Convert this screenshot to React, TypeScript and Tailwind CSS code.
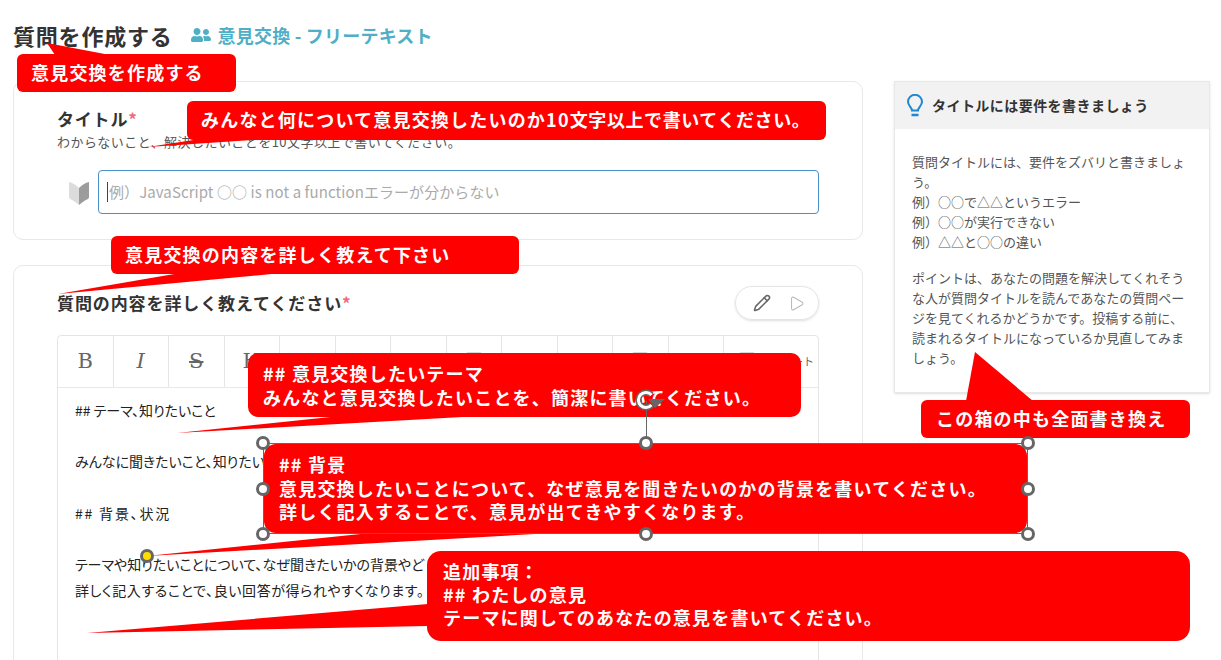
import { Pencil, Play, Square, ArrowUp } from 'lucide-react'
import { FaUserFriends } from 'react-icons/fa'

const sansJp = "font-['Noto_Sans_CJK_JP','Liberation_Sans',sans-serif]"
const slab = "font-['DejaVu_Serif',serif] text-[21px] leading-none"

function Wakaba() {
  return (
    <svg width="22" height="28" viewBox="0 0 22 28" className="shrink-0">
      <path d="M1 4 Q6 5 11 10 L11 27 Q5 22 2 21 Q1 20 1 19 Z" fill="#dcdcdc" />
      <path d="M21 4 Q16 5 11 10 L11 27 Q17 22 20 21 Q21 20 21 19 Z" fill="#9c9c9c" />
    </svg>
  )
}

function Bulb() {
  return (
    <svg width="18" height="24" viewBox="0 0 18 24" className="shrink-0" fill="none" stroke="#1e88d0" strokeWidth="2">
      <path d="M6 16.5 C6 13.5 2 12 2 7.8 A7 7 0 0 1 16 7.8 C16 12 12 13.5 12 16.5 Z" />
      <path d="M5.5 21 H12.5" strokeWidth="2.5" />
    </svg>
  )
}

const toolCells = [
  <span className={slab}>B</span>,
  <span className={`${slab} italic`}>I</span>,
  <span className={`${slab} line-through`}>S</span>,
  <span className={slab}>H</span>,
  null,
  null,
  <ArrowUp size={22} />,
  <Square size={22} />,
  null,
  null,
  <Square size={22} />,
  null,
]

function Callout({ className, children }: { className: string; children: React.ReactNode }) {
  return (
    <div className={`absolute bg-[#ff0000] text-white text-[18px] font-bold tracking-[1.2px] whitespace-nowrap ${className}`}>
      {children}
    </div>
  )
}

function Handle({ className, fill = 'bg-white' }: { className: string; fill?: string }) {
  return <div className={`absolute w-[14px] h-[14px] rounded-full border-[3px] border-[#666666] ${fill} ${className}`} />
}

// 図形の選択枠。ハンドルは枠の四隅と辺の中央に置く
function SelectionFrame() {
  return (
    <div className="absolute left-[263px] top-[443px] w-[765px] h-[91px] border-[1.5px] border-[#666666]">
      <div className="absolute left-1/2 -top-[43px] w-[1.5px] h-[43px] bg-[#666666]" />
      <Handle className="-left-[8px] -top-[8px]" />
      <Handle className="left-1/2 -ml-[7px] -top-[8px]" />
      <Handle className="-right-[8px] -top-[8px]" />
      <Handle className="-left-[8px] top-1/2 -mt-[7px]" />
      <Handle className="-right-[8px] top-1/2 -mt-[7px]" />
      <Handle className="-left-[8px] -bottom-[8px]" />
      <Handle className="left-1/2 -ml-[7px] -bottom-[8px]" />
      <Handle className="-right-[8px] -bottom-[8px]" />
    </div>
  )
}

export default function App() {
  return (
    <div className={`relative w-[1221px] h-[660px] overflow-hidden bg-white text-[#333333] ${sansJp}`}>
      <div className="flex pl-[13px]">
        <main className="w-[850px]">
          <div className="flex items-center h-[81px] pb-[12px]">
            <h1 className="text-[22px] tracking-[0.8px] font-bold leading-none">質問を作成する</h1>
            <div className="flex items-center gap-[7px] ml-[18px] mt-[1px] text-[#4fafc6] text-[18px] tracking-[0.2px] font-bold">
              <FaUserFriends size={20} />
              <span>意見交換 - フリーテキスト</span>
            </div>
          </div>

          <section className="h-[159px] border border-[#e8e8e8] rounded-[10px] px-[43px] pt-[24px]">
            <div className="text-[17px] tracking-[0.8px] font-bold leading-[26px]">
              タイトル<span className="text-[#f06a7a]">*</span>
            </div>
            <p className="text-[13px] tracking-[0.45px] leading-[20px] text-[#555555]">わからないこと、解決したいことを10文字以上で書いてください。</p>
            <div className="flex items-center gap-[8px] mt-[18px] pl-[11px]">
              <Wakaba />
              <div className="flex-1 h-[44px] border border-[#4a90c8] rounded-[4px] flex items-center pl-[8px] text-[15px] tracking-[0.08px] text-[#aaaaaa]">
                <span className="w-px h-[20px] bg-[#444444] mr-[1px]" />
                例）JavaScript ○○ is not a functionエラーが分からない
              </div>
            </div>
          </section>

          <section className="mt-[25px] h-[420px] border border-[#e8e8e8] rounded-[10px] px-[43px] pt-[19px]">
            <div className="flex items-center justify-between h-[36px]">
              <div className="text-[17px] tracking-[0.9px] font-bold">
                質問の内容を詳しく教えてください<span className="text-[#f06a7a]">*</span>
              </div>
              <div className="flex items-center gap-[17px] w-[84px] h-[34px] rounded-full border border-[#e5e5e5] shadow-sm pl-[17px]">
                <Pencil size={18} className="text-[#666666]" />
                <Play size={17} strokeWidth={1.5} className="text-[#bbbbbb]" />
              </div>
            </div>
            <div className="mt-[14px] border border-[#e5e5e5] rounded-t-[4px] h-[330px]">
              <div className="flex h-[52px] border-b border-[#e8e8e8]">
                {toolCells.map((icon, i) => (
                  <div key={i} className="w-[55.5px] border-r border-[#e5e5e5] flex items-center justify-center text-[#666666]">
                    {icon}
                  </div>
                ))}
                <div className="flex-1 flex items-center pl-[12px] text-[11px] text-[#666666]">
                  <Square size={22} fill="#666666" />
                  <span className="ml-auto pr-[4px]">ート</span>
                </div>
              </div>
              <div className="pl-[17px] pt-[10px] text-[14px] leading-[25.7px] text-[#222222] [font-feature-settings:'palt']">
                <p>## テーマ、知りたいこと</p>
                <p className="mt-[25.7px]">みんなに聞きたいこと、知りたい</p>
                <p className="mt-[25.7px] tracking-[1.8px]">## 背景、状況</p>
                <p className="mt-[25.7px]">テーマや知りたいことについて、なぜ聞きたいかの背景やど</p>
                <p className="tracking-[0.6px]">詳しく記入することで、良い回答が得られやすくなります。</p>
              </div>
            </div>
          </section>
        </main>

        <aside className="ml-[31px] mt-[81px] w-[316px] h-[312px] border border-[#e8e8e8] shadow-sm">
          <div className="flex items-center h-[47px] bg-[#f2f2f2] pl-[11px] gap-[8px] text-[14px] tracking-[0.45px] font-bold">
            <Bulb />
            タイトルには要件を書きましょう
          </div>
          <div className="px-[17px] pt-[23px] text-[13px] leading-[20px] text-[#555555]">
            <p>質問タイトルには、要件をズバリと書きましょう。</p>
            <p>例）○○で△△というエラー</p>
            <p>例）○○が実行できない</p>
            <p>例）△△と○○の違い</p>
            <p className="mt-[16px]">
              ポイントは、あなたの問題を解決してくれそうな人が質問タイトルを読んであなたの質問ページを見てくれるかどうかです。投稿する前に、読まれるタイトルになっているか見直してみましょう。
            </p>
          </div>
        </aside>
      </div>

      {/* 吹き出しのしっぽ */}
      <svg className="absolute inset-0" width="1221" height="660" viewBox="0 0 1221 660">
        <polygon points="47,43 55,55 110,55" fill="#ff0000" />
        <polygon points="148,147 200,139 267,139" fill="#ff0000" />
        <polygon points="58,294 180,273 282,273" fill="#ff0000" />
        <polygon points="177,433 340,416 480,416" fill="#ff0000" />
        <polygon points="147,556 380,532 570,532" fill="#ff0000" />
        <polygon points="87,633 428,604 428,626" fill="#ff0000" />
        <polygon points="975,352 966,401 1033,401" fill="#ff0000" />
      </svg>

      <Callout className="left-[17px] top-[54px] w-[219px] h-[38px] rounded-[6px] pl-[14px] leading-[36px]">意見交換を作成する</Callout>
      <Callout className="left-[187px] top-[101px] w-[639px] h-[39px] rounded-[6px] pl-[14px] leading-[37px]">
        みんなと何について意見交換したいのか10<span className="tracking-[0.6px]">文字以上で書いてください。</span>
      </Callout>
      <Callout className="left-[111px] top-[236px] w-[408px] h-[38px] rounded-[6px] pl-[14px] leading-[36px]">意見交換の内容を詳しく教えて下さい</Callout>
      <Callout className="left-[248px] top-[353px] w-[553px] h-[64px] rounded-[10px] pl-[15px] pt-[8px] leading-[24px]">
        <p>## 意見交換したいテーマ</p>
        <p>みんなと意見交換したいことを、簡潔に書いてください。</p>
      </Callout>
      <Callout className="left-[921px] top-[400px] w-[269px] h-[38px] rounded-[6px] pl-[15px] leading-[36px]">この箱の中も全面書き換え</Callout>
      <Callout className="left-[264px] top-[444px] w-[763px] h-[89px] rounded-[12px] pl-[15px] pt-[9px] leading-[23.5px]">
        <p>## 背景</p>
        <p>意見交換したいことについて、なぜ意見を聞きたいのかの背景を書いてください。</p>
        <p>詳しく記入することで、意見が出てきやすくなります。</p>
      </Callout>
      <Callout className="left-[427px] top-[551px] w-[763px] h-[90px] rounded-[14px] pl-[16px] pt-[9px] leading-[23px]">
        <p>追加事項：</p>
        <p>## わたしの意見</p>
        <p>テーマに関してのあなたの意見を書いてください。</p>
      </Callout>

      <SelectionFrame />

      {/* 黄色の調整ハンドルと回転ハンドル */}
      <Handle className="left-[140px] top-[549px]" fill="bg-[#ffdd00]" />
      <svg className="absolute left-[631px] top-[386px]" width="36" height="30" viewBox="0 0 36 30">
        <path d="M20.5 19 A7.5 7.5 0 1 1 20.5 9" fill="none" stroke="#666666" strokeWidth="6" />
        <path d="M20.5 19 A7.5 7.5 0 1 1 20.5 9" fill="none" stroke="#ffffff" strokeWidth="3" />
        <polygon points="17,13 34,13 24,22" fill="#666666" />
      </svg>
    </div>
  )
}
